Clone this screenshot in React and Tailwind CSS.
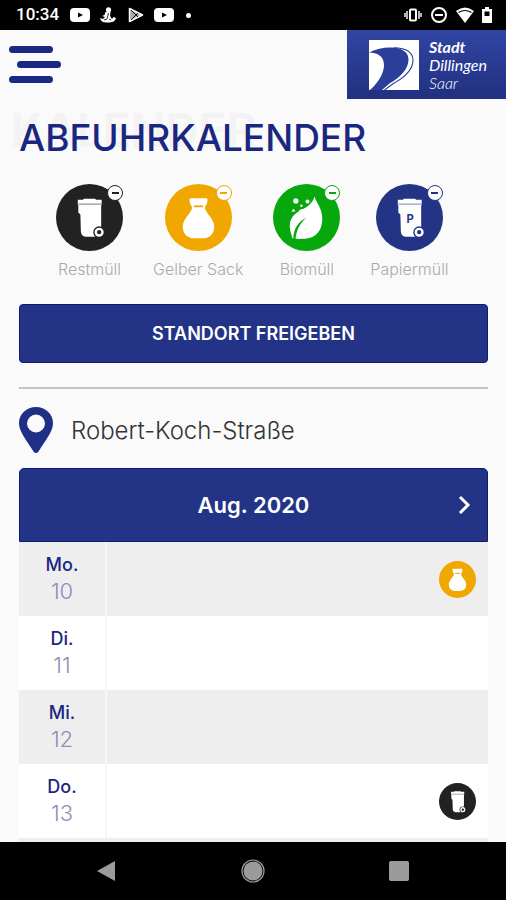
import { useState } from 'react'

const BINS = [
  { id: 'rest', label: 'Restmüll', bg: 'bg-[#222222]', text: 'text-[#222222]', badge: 'border-[#222222]' },
  { id: 'gelb', label: 'Gelber Sack', bg: 'bg-[#f0a800]', text: 'text-[#f0a800]', badge: 'border-[#f0a800]' },
  { id: 'bio', label: 'Biomüll', bg: 'bg-[#06a80d]', text: 'text-[#06a80d]', badge: 'border-[#06a80d]' },
  { id: 'papier', label: 'Papiermüll', bg: 'bg-[#233487]', text: 'text-[#233487]', badge: 'border-[#233487]' },
]

const DAYS = [
  { name: 'Mo.', date: 10, pickup: 'gelb' },
  { name: 'Di.', date: 11 },
  { name: 'Mi.', date: 12 },
  { name: 'Do.', date: 13, pickup: 'rest' },
]

function BinShape({ letter }) {
  return (
    <>
      <path d="M21.500 15.500h5l1-1h11l1 1h5.500v5.500h-23.500z" fill="#fff" />
      <path d="M22 20h22.500v32H30q-5 0-5.500-5L24 30l-2-2z" fill="#fff" />
      <path d="M22 19.800h23" stroke="currentColor" strokeWidth="1" opacity=".6" />
      {letter && (
        <text x="33.500" y="38" textAnchor="middle" fontSize="11" fontWeight="700" fontFamily="Inter, sans-serif" fill="currentColor">P</text>
      )}
      <circle cx="42.500" cy="47.500" r="5.800" fill="currentColor" />
      <circle cx="42.500" cy="47.500" r="3.300" fill="none" stroke="#fff" strokeWidth="2.400" />
    </>
  )
}

function SackShape() {
  return (
    <>
      <path d="M25.500 14h15q1.500 0 1.500 2l-1 4-1.500 2.500v2C41.500 30 48.500 35 48.500 42c0 8-6 11.500-11 11.500h-9C23.500 53.500 17.500 50 17.500 42c0-7 7-12 9-17.500v-2L25 20l-1-4q0-2 1.500-2z" fill="#fff" />
      <path d="M28.500 22h9" stroke="currentColor" strokeWidth="1.800" />
    </>
  )
}

function LeafShape() {
  return (
    <>
      <path d="M41 12c1 6 7.500 11 7.500 22 0 14-8 19.500-18 20-4 .2-8 .2-11.500-.5-.5-4-2.500-7-2.500-12C16.500 31 25 27 31 24c5-3 9-7 10-12z" fill="#fff" />
      <path d="M33 33C25 37 20 44 20 54.500l2.200.2C22.500 47 26 39 33 33z" fill="currentColor" />
      <circle cx="22.500" cy="16.700" r="2.600" fill="#fff" />
      <circle cx="34" cy="17.300" r="2" fill="#fff" />
      <path d="m18 27 2.500-2.500 1.500 2.500z" fill="#fff" />
      <circle cx="28" cy="21.500" r="1.200" fill="#fff" />
      <path d="m26 26.500 3-1.500" stroke="#fff" strokeWidth="1.200" />
    </>
  )
}

function WasteIcon({ type, className }) {
  const bin = BINS.find(b => b.id === type)
  return (
    <span className={`block rounded-full ${bin.bg} ${bin.text} ${className}`}>
      <svg viewBox="0 0 66 66" className="size-full" aria-hidden="true">
        {type === 'rest' && <BinShape />}
        {type === 'papier' && <BinShape letter />}
        {type === 'gelb' && <SackShape />}
        {type === 'bio' && <LeafShape />}
      </svg>
    </span>
  )
}

function YoutubeGlyph() {
  return (
    <svg viewBox="0 0 20 14" className="h-[14px] w-5" aria-hidden="true">
      <rect width="20" height="14" rx="4" fill="#fff" />
      <path d="m8 4.500 5 2.500-5 2.500z" fill="#000" />
    </svg>
  )
}

function StatusBar() {
  return (
    <div className="flex h-[30px] shrink-0 items-center justify-between bg-black pr-[14px] pl-4 text-white">
      <div className="flex items-center">
        <span className="w-[54px] font-[Roboto] text-[17px] font-medium">10:34</span>
        <YoutubeGlyph />
        <svg viewBox="0 0 16 16" className="ml-2.5 size-4" aria-hidden="true">
          <circle cx="8.500" cy="2.800" r="2.600" fill="#fff" />
          <path d="M5.500 5h5l-.5 4 2 3 1.500-2L16 11q-1 4-6 4.500H7q-4 .5-6-2L0 11l3 1 2-2-3-1 2.500-1z" fill="#fff" />
          <path d="m8.500 6-1.500 6M4 13l3-1M9 12l2 1" stroke="#000" strokeWidth=".8" />
        </svg>
        <svg viewBox="0 0 16 16" className="ml-3 size-4" aria-hidden="true">
          <path d="M1.500 1.500v13l13-6.500z" fill="#aaa" stroke="#fff" strokeWidth="1.500" strokeLinejoin="round" />
          <path d="m3 3 7 7M3 13l7-7" stroke="#000" strokeWidth=".9" />
        </svg>
        <span className="ml-2.5"><YoutubeGlyph /></span>
        <span className="ml-3 size-[5px] rounded-full bg-white" />
      </div>
      <div className="flex items-center gap-2">
        <svg viewBox="0 0 18 14" className="h-[14px] w-[18px]" fill="none" aria-hidden="true">
          <path d="M3 3v8M15 3v8M1 5v4M17 5v4" stroke="#b5b5b5" strokeWidth="2" />
          <rect x="6" y="1.500" width="6" height="11" rx="1" stroke="#fff" strokeWidth="2" />
        </svg>
        <svg viewBox="0 0 18 18" className="size-[18px]" fill="none" stroke="#fff" strokeWidth="2" aria-hidden="true">
          <circle cx="9" cy="9" r="7" />
          <path d="M5 9h8" />
        </svg>
        <svg viewBox="0 0 18 16" className="h-4 w-[18px]" aria-hidden="true">
          <path d="M0 4q9-7 18 0L9 16z" fill="#fff" />
          <path d="M2.500 5.500q6.500-4 13 0" fill="none" stroke="#000" strokeWidth="1.200" />
        </svg>
        <svg viewBox="0 0 10 16" className="h-4 w-[10px]" aria-hidden="true">
          <path d="M3 0h4v2h3v14H0V2h3z" fill="#fff" />
          <path d="M2.500 4.500h5V9h-5z" fill="#000" />
        </svg>
      </div>
    </div>
  )
}

function Logo() {
  return (
    <a href="#" className="flex h-[69px] w-[159px] items-center gap-2.5 bg-linear-to-b from-[#3145a4] to-[#21307f] pl-[22px] text-white">
      <svg viewBox="0 0 50 50" className="size-[50px]" aria-hidden="true">
        <path d="M0 0h50v50H0z" fill="#fff" />
        <path d="M0 12.500C8 8.500 16 7 23 7.500c10 .5 16.500 4.500 16.500 12 0 10-9 18-19 24L13 50H1c10-9 14-18 14-25C15 16 8 12.500 0 12.500z" fill="#2b3e99" />
        <path d="M25 7.800c13 .4 19 5 19 12.500 0 10-10 18-20 23.500L15.500 50" fill="none" stroke="#2b3e99" strokeWidth="1.100" />
      </svg>
      <span className="font-[Lato] text-[16px] leading-[18px] italic">
        <span className="block font-bold">Stadt</span>
        <span className="block">Dillingen</span>
        <span className="block font-light">Saar</span>
      </span>
    </a>
  )
}

export default function App() {
  const [hidden, setHidden] = useState([])
  const toggle = id => setHidden(h => (h.includes(id) ? h.filter(x => x !== id) : [...h, id]))

  return (
    <div className="flex h-screen flex-col overflow-hidden bg-[#fafafa] font-[Inter,sans-serif]">
      <StatusBar />

      <main className="min-h-0 flex-1 overflow-hidden">
        <header className="flex items-start justify-between">
          <button type="button" aria-label="Menü" className="mt-4 ml-[9px] flex w-[52px] flex-col gap-2">
            <span className="h-[7px] w-11 rounded-full bg-[#1a2a83]" />
            <span className="h-[7px] w-11 self-end rounded-full bg-[#1a2a83]" />
            <span className="h-[7px] w-11 rounded-full bg-[#1a2a83]" />
          </button>
          <Logo />
        </header>

        <div className="pr-[18px] pl-[19px]">
          <div className="relative mt-[15px] h-12">
            <span aria-hidden="true" className="absolute -top-2 -left-2 text-[46px] leading-[48px] font-semibold text-[#f3f3f3]">KALENDER</span>
            <h1 className="relative text-[37px] leading-[48px] font-medium text-[#1a2781]">ABFUHRKALENDER</h1>
          </div>

          <div className="mt-[22px] flex gap-[30px] pl-[37px]">
            {BINS.map(b => (
              <button key={b.id} type="button" aria-pressed={!hidden.includes(b.id)} onClick={() => toggle(b.id)} className="flex flex-col items-center">
                <span className="relative">
                  <WasteIcon type={b.id} className="size-[67px]" />
                  <span className={`absolute top-px right-0 flex size-4 items-center justify-center rounded-full border bg-white ${b.badge}`}>
                    <span className={`h-0.5 w-[7px] ${b.bg}`} />
                  </span>
                </span>
                <span className="mt-2 text-[16px] leading-5 font-light whitespace-nowrap text-[#aaaaaa]">{b.label}</span>
              </button>
            ))}
          </div>

          <button type="button" className="mt-[25px] h-[59px] w-full rounded-[4px] border border-[#0d1b75] bg-[#233487] text-[18px] font-semibold text-white">
            STANDORT FREIGEBEN
          </button>

          <hr className="mt-6 border-t-2 border-[#c4c4c4]" />

          <div className="mt-[18px] flex items-center gap-[18px]">
            <svg viewBox="0 0 34 46" className="h-[46px] w-[34px]" aria-hidden="true">
              <path d="M17 0C7.500 0 0 7 0 16c0 8 6 15 14.500 28.500q2.500 3 5 0C28 31 34 24 34 16 34 7 26.500 0 17 0zm0 7.500a9 9 0 1 1 0 18 9 9 0 0 1 0-18z" fill="#1f2f85" fillRule="evenodd" />
            </svg>
            <span className="pt-0.5 text-[24px] leading-7 font-light text-[#333333]">Robert-Koch-Straße</span>
          </div>

          <section className="mt-[15px]">
            <div className="relative flex h-[74px] items-center justify-center rounded-t-[5px] border border-[#0d1b75] bg-[#233487] text-white">
              <h2 className="text-[22px] font-semibold">Aug. 2020</h2>
              <button type="button" aria-label="Nächster Monat" className="absolute right-4">
                <svg viewBox="0 0 14 20" className="h-5 w-[14px]" fill="none" stroke="#fff" strokeWidth="3" aria-hidden="true">
                  <path d="m3 2 8 8-8 8" />
                </svg>
              </button>
            </div>
            <table className="w-full">
              <tbody>
                {DAYS.map(d => (
                  <tr key={d.date} className="h-[74px] odd:bg-[#eeeeee] even:bg-white">
                    <th scope="row" className="w-[87px] border-r-2 border-[#f7f7f7] p-0 text-center font-normal">
                      <span className="block text-[18px] leading-6 font-medium text-[#1a2781]">{d.name}</span>
                      <span className="block text-[22px] leading-7 font-light text-[#8a8fb8]">{d.date}</span>
                    </th>
                    <td className="p-0 pr-3">
                      {d.pickup && <WasteIcon type={d.pickup} className="ml-auto size-[37px]" />}
                    </td>
                  </tr>
                ))}
              </tbody>
            </table>
            <div className="h-2 bg-[#eeeeee]" />
          </section>
        </div>
      </main>

      <nav className="flex h-[58px] shrink-0 items-center justify-around bg-black px-[35px] text-[#9b9b9b]">
        <button type="button" aria-label="Zurück">
          <svg viewBox="0 0 22 22" className="size-[22px]" aria-hidden="true"><path d="M1 11 19 1v20z" fill="currentColor" /></svg>
        </button>
        <button type="button" aria-label="Startbildschirm">
          <svg viewBox="0 0 24 24" className="size-6" aria-hidden="true">
            <circle cx="12" cy="12" r="9.500" fill="currentColor" />
            <circle cx="12" cy="12" r="11" fill="none" stroke="currentColor" strokeWidth="1.200" />
          </svg>
        </button>
        <button type="button" aria-label="Übersicht">
          <svg viewBox="0 0 22 22" className="size-[22px]" aria-hidden="true"><rect x="1" y="1" width="20" height="20" rx="2" fill="currentColor" /></svg>
        </button>
      </nav>
    </div>
  )
}
